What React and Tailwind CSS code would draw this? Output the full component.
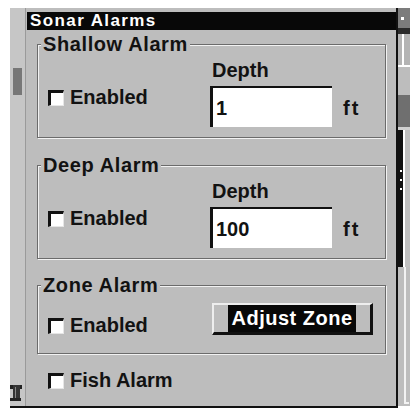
import React from 'react';

const Check = ({ label }) => (
  <div className="flex items-center gap-[6px]">
    <span className="w-[16px] h-[16px] mt-[1px] bg-white border-t-[3px] border-l-[3px] border-t-[#111] border-l-[#111] border-r border-b border-r-[#e6e6e6] border-b-[#e6e6e6]" />
    <span className="leading-none">{label}</span>
  </div>
);

const Group = ({ title, className = '', children }) => (
  <fieldset className={`w-[349px] border border-[#6b6b6b] shadow-[1px_1px_0_#f2f2f2,inset_1px_1px_0_#f2f2f2] ${className}`}>
    <legend className="ml-[3px] px-[2px] bg-[#bdbdbd] leading-none tracking-[0.6px]">{title}</legend>
    {children}
  </fieldset>
);

const DepthField = ({ value }) => (
  <div className="flex flex-col pt-[6px]">
    <span className="pl-[2px] leading-none">Depth</span>
    <div className="flex items-center mt-[6px]">
      <div className="w-[122px] h-[41px] flex items-center pl-[3px] bg-white border-t-2 border-l-[3px] border-[#111] leading-none">
        {value}
      </div>
      <span className="ml-[11px] pt-[3px] leading-none tracking-[2px]">ft</span>
    </div>
  </div>
);

const Scrollbar = () => (
  <div className="w-[12px] flex flex-col">
    <div className="h-[20px] bg-[#7c7c7c] flex items-center pl-[3px]">
      <span className="w-[3px] h-[3px] bg-white" />
    </div>
    <div className="h-[6px] bg-[#2a2a2a]" />
    <div className="h-[31px] bg-[#b4b4b4] flex pl-[4px]">
      <span className="w-[2px] bg-white" />
    </div>
    <div className="h-[2px] bg-white" />
    <div className="h-[28px] bg-[#bdbdbd]" />
    <div className="h-[32px] bg-[#6f6f6f]" />
    <div className="h-[3px] bg-[#d0d0d0]" />
    <div className="h-[137px] flex">
      <div className="w-[5px] bg-[#111] flex flex-col items-center gap-[7px] pt-[40px]">
        <span className="w-[2px] h-[2px] bg-white" />
        <span className="w-[2px] h-[2px] bg-white" />
        <span className="w-[2px] h-[2px] bg-white" />
      </div>
      <div className="flex-1 bg-[#c0c0c0] flex">
        <span className="w-[2px] bg-white" />
      </div>
    </div>
    <div className="flex-1 bg-[#bdbdbd] flex flex-col">
      <div className="flex-1 flex pl-[6px]">
        <span className="w-[2px] bg-[#f2f2f2]" />
      </div>
      <div className="h-[2px] ml-[6px] w-[5px] bg-[#f2f2f2] mb-[2px]" />
    </div>
  </div>
);

const LeftStrip = () => (
  <div className="w-[17px] flex">
    <div className="w-[15px] bg-[#c6c6c6] flex flex-col">
      <div className="mt-[60px] ml-[3px] w-[9px] h-[27px] bg-[#777]" />
      <div className="flex-1" />
      <svg width="13" height="18" viewBox="0 0 13 18" className="mb-[4px]">
        <rect x="0" y="1" width="12" height="4" fill="#222" />
        <rect x="3" y="1" width="7" height="16" fill="#333" />
        <rect x="5" y="3" width="1" height="12" fill="#888" />
        <rect x="0" y="14" width="11" height="3" fill="#222" />
      </svg>
    </div>
    <div className="w-[1px] bg-[#9a9a9a]" />
    <div className="w-[1px] bg-[#bdbdbd]" />
  </div>
);

export default function App() {
  return (
    <div className="w-[415px] h-[412px] bg-white pt-2 overflow-hidden font-['Liberation_Sans',Arial,sans-serif] font-bold text-[20px] text-[#121212]">
      <div className="flex ml-[10px] w-[400px] h-[398px]">
        <LeftStrip />
        <div className="w-[369px] bg-[#bdbdbd] pt-[4px] flex flex-col">
          <div className="h-[18px] bg-[#080808] text-white text-[17px] leading-[18px] tracking-[1.4px] pl-[3px]">
            Sonar Alarms
          </div>
          <div className="pl-[10px] pt-[4px] flex flex-col">
            <Group title="Shallow Alarm">
              <div className="flex pl-[10px] pb-[10px]">
                <div className="w-[162px] pt-[33px]">
                  <Check label="Enabled" />
                </div>
                <DepthField value="1" />
              </div>
            </Group>
            <Group title="Deep Alarm" className="mt-[17px]">
              <div className="flex pl-[10px] pb-[10px]">
                <div className="w-[162px] pt-[33px]">
                  <Check label="Enabled" />
                </div>
                <DepthField value="100" />
              </div>
            </Group>
            <Group title="Zone Alarm" className="mt-[16px]">
              <div className="flex pl-[10px] pb-[18px]">
                <div className="w-[162px] pt-[20px]">
                  <Check label="Enabled" />
                </div>
                <button className="mt-[8px] ml-[2px] w-[161px] h-[32px] flex items-center justify-center bg-[#bdbdbd] border-t-2 border-l-2 border-t-[#eeeeee] border-l-[#eeeeee] border-r-[3px] border-b-[3px] border-r-[#111] border-b-[#111]">
                  <span className="h-[27px] px-[3px] pb-[2px] flex items-center bg-[#080808] text-white leading-none tracking-[0.5px]">
                    Adjust Zone
                  </span>
                </button>
              </div>
            </Group>
            <div className="mt-[16px] pl-[11px]">
              <Check label="Fish Alarm" />
            </div>
          </div>
        </div>
        <div className="w-[2px] bg-[#111]" />
        <Scrollbar />
      </div>
      <div className="ml-[10px] w-[388px] h-[2px] bg-[#111]" />
    </div>
  );
}
